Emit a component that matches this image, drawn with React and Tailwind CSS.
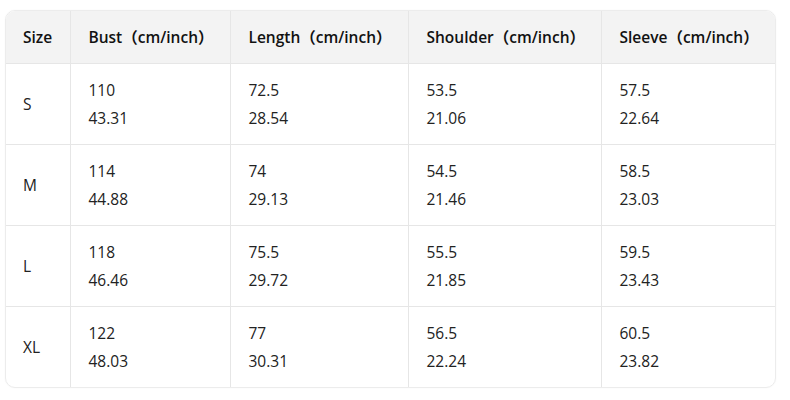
export default function App() {
  const cols = [
    { label: "Size", w: "w-[64px]" },
    { label: "Bust（cm/inch）", w: "w-[160px]" },
    { label: "Length（cm/inch）", w: "w-[178px]" },
    { label: "Shoulder（cm/inch）", w: "w-[193px]" },
    { label: "Sleeve（cm/inch）", w: "w-[174px]" },
  ];
  const rows = [
    ["S", ["110", "43.31"], ["72.5", "28.54"], ["53.5", "21.06"], ["57.5", "22.64"]],
    ["M", ["114", "44.88"], ["74", "29.13"], ["54.5", "21.46"], ["58.5", "23.03"]],
    ["L", ["118", "46.46"], ["75.5", "29.72"], ["55.5", "21.85"], ["59.5", "23.43"]],
    ["XL", ["122", "48.03"], ["77", "30.31"], ["56.5", "22.24"], ["60.5", "23.82"]],
  ];
  return (
    <div
      className="w-[790px] h-[400px] bg-white pt-[10px] pl-[5px]"
      style={{ fontFamily: '"Open Sans", "Noto Sans CJK SC", sans-serif' }}
    >
      <div className="w-[771px] rounded-[10px] border border-[#ececec] overflow-hidden shadow-[0_0_2px_rgba(0,0,0,0.04)]">
        <table className="w-full border-collapse table-fixed text-[15.5px]">
          <thead>
            <tr className="bg-[#f3f3f3] h-[52px]">
              {cols.map((c, i) => (
                <th
                  key={i}
                  className={`${c.w} text-left font-semibold text-[#111111] ${i === 0 ? "pl-[17px]" : "pl-[18px]"} pr-[8px] pt-[2px] border-b border-[#e6e6e6] ${i < cols.length - 1 ? "border-r" : ""}`}
                >
                  {c.label}
                </th>
              ))}
            </tr>
          </thead>
          <tbody>
            {rows.map((r, ri) => (
              <tr key={ri} className="h-[81px]">
                {r.map((cell, ci) => (
                  <td
                    key={ci}
                    className={`${ci === 0 ? "pl-[17px]" : "pl-[18px]"} pr-[8px] align-middle text-[#222222] leading-[28px] border-[#e6e6e6] ${ri < rows.length - 1 ? "border-b" : ""} ${ci < r.length - 1 ? "border-r" : ""}`}
                  >
                    {Array.isArray(cell) ? (
                      <div className="flex flex-col">
                        <span>{cell[0]}</span>
                        <span>{cell[1]}</span>
                      </div>
                    ) : (
                      cell
                    )}
                  </td>
                ))}
              </tr>
            ))}
          </tbody>
        </table>
      </div>
    </div>
  );
}
